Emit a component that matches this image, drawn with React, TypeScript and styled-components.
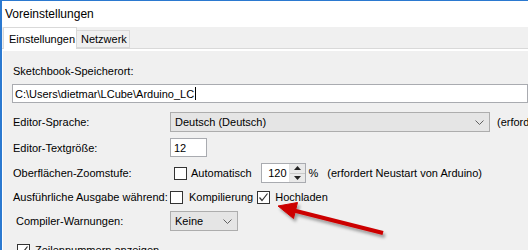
import React from "react";
import styled, { createGlobalStyle } from "styled-components";

const GlobalStyle = createGlobalStyle`
  html, body {
    margin: 0;
    padding: 0;
    background: #f0f0f0;
    overflow: hidden;
  }
  #root {
    width: 528px;
    height: 250px;
  }
`;

const Window = styled.div`
  position: relative;
  width: 528px;
  height: 250px;
  box-sizing: border-box;
  overflow: hidden;
  border-top: 1px solid #2b79d0;
  border-left: 2px solid #2b79d0;
  background: #f0f0f0;
  font-family: "Liberation Sans", Arial, sans-serif;
  font-size: 11px;
  color: #000;
  display: flex;
  flex-direction: column;
`;

const TitleBar = styled.div`
  height: 26px;
  flex-shrink: 0;
  background: #fff;
  display: flex;
  align-items: center;
  padding-left: 3px;
  font-size: 12px;
`;

const TabStrip = styled.div`
  height: 21px;
  flex-shrink: 0;
  display: flex;
  align-items: flex-end;
  padding-left: 1px;
  border-bottom: 1px solid #d9d9d9;
`;

const Tab = styled.div<{ $active?: boolean }>`
  box-sizing: border-box;
  display: flex;
  align-items: center;
  white-space: nowrap;
  border: 1px solid #d9d9d9;
  ${(p) =>
    p.$active
      ? `
    height: 22px;
    width: 74px;
    padding-left: 5px;
    background: #fff;
    border-bottom: none;
    margin-bottom: -1px;
    position: relative;
    z-index: 1;
  `
      : `
    height: 18px;
    width: 53px;
    padding-left: 4px;
    border-left: none;
    margin-bottom: 0;
    background: #f0f0f0;
  `}
`;

const Panel = styled.div`
  flex: 1;
  display: flex;
  flex-direction: column;
  padding: 13px 0 0 11px;
  box-shadow: inset 1px 2px 0 #fff;
  white-space: nowrap;
`;

const Row = styled.div<{ $h: number }>`
  height: ${(p) => p.$h}px;
  flex-shrink: 0;
  display: grid;
  grid-template-columns: 157px auto;
  align-items: center;
`;

const WideRow = styled.div<{ $h: number; $pad?: number }>`
  height: ${(p) => p.$h}px;
  flex-shrink: 0;
  display: flex;
  align-items: center;
  padding-left: ${(p) => p.$pad ?? 0}px;
`;

const Label = styled.span<{ $pad?: number }>`
  padding-left: ${(p) => p.$pad ?? 0}px;
`;

const Controls = styled.div`
  display: flex;
  align-items: center;
`;

const PathField = styled.div`
  box-sizing: border-box;
  margin-left: -1px;
  width: 540px;
  height: 19px;
  background: #fff;
  border: 1px solid #a9abb0;
  display: flex;
  align-items: center;
  padding-left: 2px;
`;

const Caret = styled.span`
  display: inline-block;
  width: 1px;
  height: 13px;
  margin-left: 1px;
  background: #000;
`;

const TextField = styled.div<{ $w: number }>`
  box-sizing: border-box;
  width: ${(p) => p.$w}px;
  height: 19px;
  background: #fff;
  border: 1px solid #a9abb0;
  display: flex;
  align-items: center;
  padding-left: 3px;
`;

const Select = styled.div<{ $w: number }>`
  box-sizing: border-box;
  width: ${(p) => p.$w}px;
  height: 20px;
  background: #e5e5e5;
  border: 1px solid #adadad;
  display: flex;
  align-items: center;
  justify-content: space-between;
  padding: 0 5px 0 4px;
`;

const Note = styled.span<{ $ml: number }>`
  margin-left: ${(p) => p.$ml}px;
`;

const Box = styled.div<{ $ml?: number }>`
  box-sizing: border-box;
  width: 13px;
  height: 13px;
  margin-left: ${(p) => p.$ml ?? 0}px;
  background: #fff;
  border: 1px solid #333;
  display: flex;
  align-items: center;
  justify-content: center;
`;

const Spinner = styled.div`
  box-sizing: border-box;
  margin-left: 9px;
  width: 45px;
  height: 20px;
  background: #fff;
  border: 1px solid #a9abb0;
  display: flex;
`;

const SpinValue = styled.div`
  flex: 1;
  display: flex;
  align-items: center;
  justify-content: flex-end;
  padding-right: 2px;
`;

const SpinButtons = styled.div`
  width: 15px;
  display: flex;
  flex-direction: column;
  border-left: 1px solid #e3e3e3;
  background: #e9e9e9;
`;

const SpinButton = styled.div<{ $top?: boolean }>`
  flex: 1;
  display: flex;
  align-items: center;
  justify-content: center;
  border-bottom: ${(p) => (p.$top ? "1px solid #c8c8c8" : "none")};
`;

const ArrowLayer = styled.svg`
  position: absolute;
  left: -2px;
  top: -1px;
  pointer-events: none;
`;

const Chevron = () => (
  <svg width="9" height="5" viewBox="0 0 9 5">
    <path d="M0.5 0.5 L4.5 4.5 L8.5 0.5" fill="none" stroke="#606060" strokeWidth="1" />
  </svg>
);

const Check = () => (
  <svg width="11" height="11" viewBox="0 0 11 11">
    <path d="M1.5 5.5 L4 8.5 L9.5 1.5" fill="none" stroke="#333" strokeWidth="1.2" />
  </svg>
);

const Checkbox = ({ checked, ml }: { checked?: boolean; ml?: number }) => (
  <Box $ml={ml}>{checked && <Check />}</Box>
);

export default function App() {
  return (
    <>
      <GlobalStyle />
      <Window>
        <TitleBar>Voreinstellungen</TitleBar>
        <TabStrip>
          <Tab $active>Einstellungen</Tab>
          <Tab>Netzwerk</Tab>
        </TabStrip>
        <Panel>
          <WideRow $h={18}>Sketchbook-Speicherort:</WideRow>
          <WideRow $h={27}>
            <PathField>
              C:\Users\dietmar\LCube\Arduino_LC
              <Caret />
            </PathField>
          </WideRow>
          <Row $h={30}>
            <Label>Editor-Sprache:</Label>
            <Controls>
              <Select $w={320}>
                Deutsch (Deutsch)
                <Chevron />
              </Select>
              <Note $ml={7}>(erfordert Neustart von Arduino)</Note>
            </Controls>
          </Row>
          <Row $h={21}>
            <Label>Editor-Textgröße:</Label>
            <Controls>
              <TextField $w={37}>12</TextField>
            </Controls>
          </Row>
          <Row $h={30}>
            <Label>Oberflächen-Zoomstufe:</Label>
            <Controls>
              <Checkbox ml={4} />
              <Note $ml={4}>Automatisch</Note>
              <Spinner>
                <SpinValue>120</SpinValue>
                <SpinButtons>
                  <SpinButton $top>
                    <svg width="7" height="4" viewBox="0 0 7 4">
                      <path d="M0 4 L3.5 0 L7 4 Z" fill="#222" />
                    </svg>
                  </SpinButton>
                  <SpinButton>
                    <svg width="7" height="4" viewBox="0 0 7 4">
                      <path d="M0 0 L3.5 4 L7 0 Z" fill="#222" />
                    </svg>
                  </SpinButton>
                </SpinButtons>
              </Spinner>
              <Note $ml={3}>%</Note>
              <Note $ml={9}>(erfordert Neustart von Arduino)</Note>
            </Controls>
          </Row>
          <Row $h={18}>
            <Label>Ausführliche Ausgabe während:</Label>
            <Controls>
              <Checkbox />
              <Note $ml={6}>Kompilierung</Note>
              <Checkbox checked ml={4} />
              <Note $ml={5}>Hochladen</Note>
            </Controls>
          </Row>
          <Row $h={30}>
            <Label $pad={3}>Compiler-Warnungen:</Label>
            <Controls>
              <Select $w={68}>
                Keine
                <Chevron />
              </Select>
            </Controls>
          </Row>
          <WideRow $h={28} $pad={4}>
            <Checkbox checked />
            <Note $ml={5}>Zeilennummern anzeigen</Note>
          </WideRow>
        </Panel>
        <ArrowLayer width="528" height="250" viewBox="0 0 528 250">
          <defs>
            <filter id="shadow" x="-20%" y="-50%" width="140%" height="200%">
              <feDropShadow dx="2" dy="3" stdDeviation="1.6" floodColor="#000" floodOpacity="0.35" />
            </filter>
          </defs>
          <g filter="url(#shadow)" fill="#cc0000" stroke="#cc0000">
            <line x1="292" y1="210" x2="383" y2="233" strokeWidth="4" />
            <path d="M278 206 L297.5 202.5 L293.5 218.5 Z" strokeWidth="1" strokeLinejoin="round" />
          </g>
        </ArrowLayer>
      </Window>
    </>
  );
}
